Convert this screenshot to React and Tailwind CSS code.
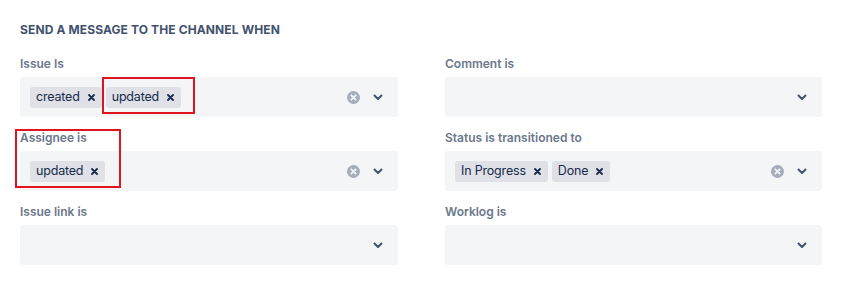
import React from 'react';

const font = { fontFamily: 'Inter, "Liberation Sans", sans-serif' };

const ClearIcon = () => (
  <svg width="13" height="13" viewBox="0 0 13 13">
    <circle cx="6.5" cy="6.5" r="6.5" fill="#a5adba" />
    <path d="M4.3 4.3l4.4 4.4M8.7 4.3l-4.4 4.4" stroke="#f4f5f7" strokeWidth="1.8" strokeLinecap="round" />
  </svg>
);

const Chevron = () => (
  <svg width="10" height="7" viewBox="0 0 10 7">
    <path d="M1.5 1.5L5 5l3.5-3.5" fill="none" stroke="#42526e" strokeWidth="2" strokeLinecap="round" strokeLinejoin="round" />
  </svg>
);

const RemoveX = () => (
  <svg width="7" height="7" viewBox="0 0 7 7">
    <path d="M1 1l5 5M6 1L1 6" stroke="#172b4d" strokeWidth="1.8" strokeLinecap="round" />
  </svg>
);

const Chip = ({ label, boxed }) => (
  <div className="relative">
    <div className="flex items-center h-[21px] rounded-[3px] bg-[#dfe1e6] pl-[6px] pr-[7px] gap-[8px]">
      <span className="text-[12.5px] tracking-[-0.015em] text-[#172b4d] leading-none">{label}</span>
      <RemoveX />
    </div>
    {boxed && (
      <div className="absolute -left-[4px] -top-[10px] -right-[14px] h-[37px] border-2 border-[#e0141e] pointer-events-none" />
    )}
  </div>
);

const Field = ({ label, chips = [], boxed, labelBox }) => (
  <div className="flex flex-col">
    <label className="relative h-4 mb-[5px] text-[12px] leading-4 font-semibold text-[#6b778c]">
      {label}
      {labelBox && (
        <div className="absolute -left-[5px] -top-[1px] w-[106px] h-[59px] border-2 border-[#e0141e] pointer-events-none" />
      )}
    </label>
    <div className="flex items-center h-10 rounded-[3px] bg-[#f4f5f7] pl-[10px] pr-[15px]">
      <div className="flex flex-1 items-center gap-[4px] pt-[1px]">
        {chips.map((c, i) => (
          <Chip key={c} label={c} boxed={boxed && i === 1} />
        ))}
      </div>
      {chips.length > 0 && (
        <div className="mr-[13px] flex">
          <ClearIcon />
        </div>
      )}
      <Chevron />
    </div>
  </div>
);

export default function App() {
  return (
    <div className="w-[845px] h-[291px] bg-white pl-5 pt-[22px]" style={font}>
      <h2 className="text-[12px] leading-4 font-bold uppercase text-[#42526e] tracking-[0.01em]">
        Send a message to the channel when
      </h2>
      <div className="grid grid-cols-[378px_377px] gap-x-[47px] gap-y-[13px] mt-[18px]">
        <Field label="Issue Is" chips={['created', 'updated']} boxed />
        <Field label="Comment is" />
        <Field label="Assignee is" chips={['updated']} labelBox />
        <Field label="Status is transitioned to" chips={['In Progress', 'Done']} />
        <Field label="Issue link is" />
        <Field label="Worklog is" />
      </div>
    </div>
  );
}
